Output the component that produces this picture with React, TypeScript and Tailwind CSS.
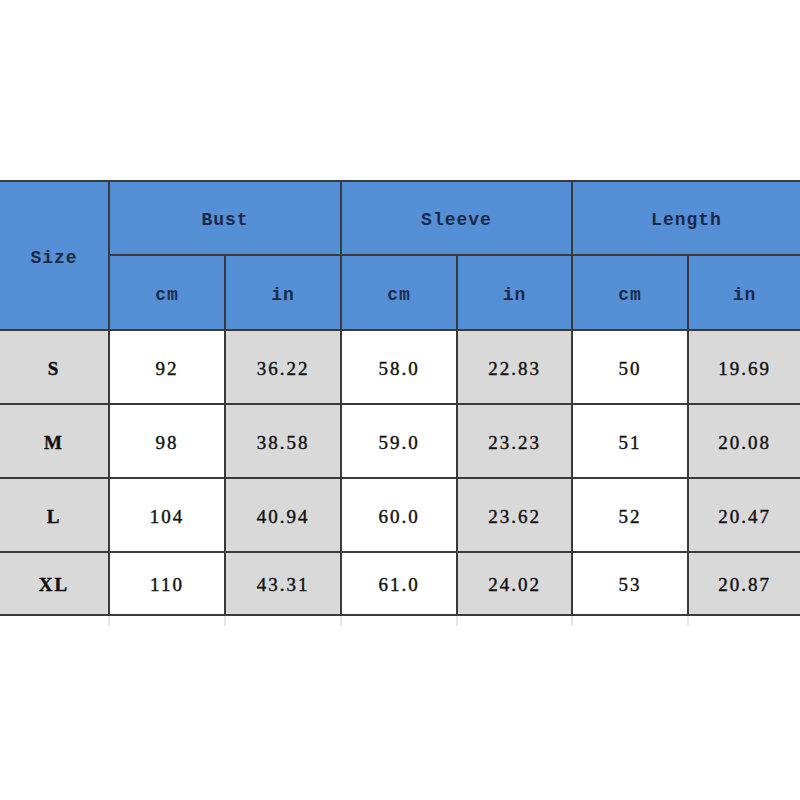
import React from "react";

const rows = [
  ["S", "92", "36.22", "58.0", "22.83", "50", "19.69"],
  ["M", "98", "38.58", "59.0", "23.23", "51", "20.08"],
  ["L", "104", "40.94", "60.0", "23.62", "52", "20.47"],
  ["XL", "110", "43.31", "61.0", "24.02", "53", "20.87"],
];

// grey / white pattern per column
const shade = [true, false, true, false, true, false, true];
const cols = "grid-cols-[108px_114px_114px_114px_113px_114px_111px]";

const head =
  "bg-[#558fd6] flex items-center justify-center pt-[5px] text-[#1b2a48] font-bold text-[18px] tracking-[1px] font-['Liberation_Mono',monospace]";

export default function App() {
  return (
    <div className="w-[800px] h-[800px] bg-white pt-[180px]">
      <div className="border-t-2 border-b-2 border-[#3a3a3a] bg-[#3a3a3a]">
        <div className={`grid ${cols} grid-rows-[72px_73px_72px_72px_72px_61px] gap-[2px]`}>
          <div className={`${head} row-span-2`}>Size</div>
          <div className={`${head} col-span-2`}>Bust</div>
          <div className={`${head} col-span-2`}>Sleeve</div>
          <div className={`${head} col-span-2`}>Length</div>
          {["cm", "in", "cm", "in", "cm", "in"].map((u, i) => (
            <div key={i} className={head}>
              {u}
            </div>
          ))}
          {rows.map((r) =>
            r.map((v, i) => (
              <div
                key={r[0] + i}
                className={`flex items-center justify-center pt-[4px] text-[19px] text-[#111] font-['Liberation_Serif',serif] tracking-[2px] [-webkit-text-stroke:0.4px_#111] ${
                  i === 0 ? "font-bold" : ""
                } ${shade[i] ? "bg-[#d9d9d9]" : "bg-white"}`}
              >
                {v}
              </div>
            ))
          )}
        </div>
      </div>
      <div className={`grid ${cols} h-[10px] gap-[2px] bg-[#e6e6e6]`}>
        {shade.map((_, i) => (
          <div key={i} className="bg-white" />
        ))}
      </div>
    </div>
  );
}
